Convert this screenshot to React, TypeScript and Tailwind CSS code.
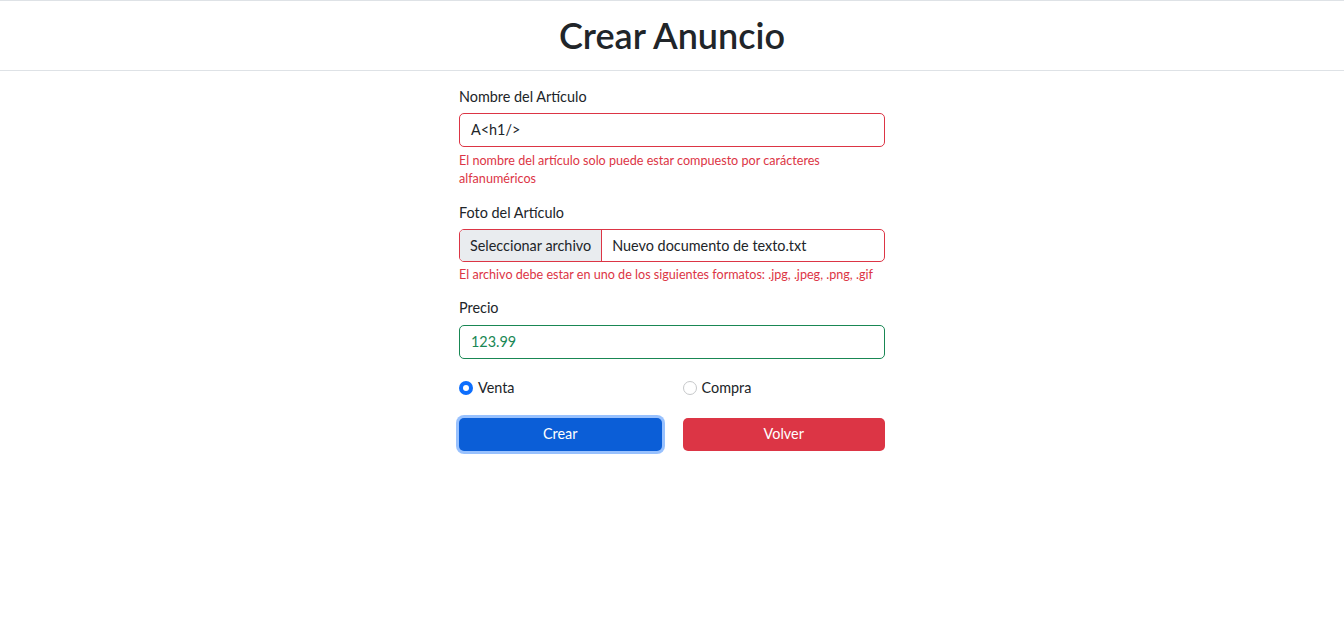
import React from "react";

export default function App() {
  const font = { fontFamily: 'Lato, "Noto Sans", sans-serif' };
  return (
    <div className="min-h-[631px] bg-white text-[#212529]" style={font}>
      <header className="border-t border-b border-[#dee2e6] h-[71px] flex items-center justify-center">
        <h1 className="text-[36px] leading-none font-semibold text-[#212529] -mt-[1px]">Crear Anuncio</h1>
      </header>
      <form className="w-[426px] mx-auto pt-[15px] text-[14.4px]">
        <div className="mb-[14px]">
          <label className="block leading-[21.6px] mb-[5px]">Nombre del Artículo</label>
          <div className="h-[34px] border border-[#dc3545] rounded-[5px] flex items-center px-[11px]">A&lt;h1/&gt;</div>
          <div className="mt-[5px] text-[12.6px] leading-[18px] text-[#dc3545]">
            El nombre del artículo solo puede estar compuesto por carácteres alfanuméricos
          </div>
        </div>
        <div className="mb-[13px]">
          <label className="block leading-[21.6px] mb-[6px]">Foto del Artículo</label>
          <div className="h-[33px] border border-[#dc3545] rounded-[5px] flex items-stretch overflow-hidden">
            <div className="bg-[#e9ecef] px-[10px] flex items-center border-r border-[#dc3545]">Seleccionar archivo</div>
            <div className="flex items-center px-[10px]">Nuevo documento de texto.txt</div>
          </div>
          <div className="mt-[4px] text-[12.6px] leading-[18px] text-[#dc3545]">
            El archivo debe estar en uno de los siguientes formatos: .jpg, .jpeg, .png, .gif
          </div>
        </div>
        <div className="mb-[18px]">
          <label className="block leading-[21.6px] mb-[6px]">Precio</label>
          <div className="h-[34px] border border-[#198754] rounded-[5px] flex items-center px-[11px] text-[#198754]">123.99</div>
        </div>
        <div className="grid grid-cols-2 gap-[21px] h-[22px] items-center">
          <div className="flex items-center gap-[5px]">
            <span className="w-[14px] h-[14px] rounded-full bg-[#0d6efd] flex items-center justify-center">
              <span className="w-[6px] h-[6px] rounded-full bg-white" />
            </span>
            <span>Venta</span>
          </div>
          <div className="flex items-center gap-[5px]">
            <span className="w-[14px] h-[14px] rounded-full border border-[#c6c8ca] bg-white" />
            <span>Compra</span>
          </div>
        </div>
        <div className="grid grid-cols-2 gap-[21px] mt-[19px]">
          <button type="button" className="h-[33px] rounded-[5px] bg-[#0b5ed7] text-white shadow-[0_0_0_3px_rgba(49,132,253,0.5)]">Crear</button>
          <button type="button" className="h-[33px] rounded-[5px] bg-[#dc3545] text-white">Volver</button>
        </div>
      </form>
    </div>
  );
}
